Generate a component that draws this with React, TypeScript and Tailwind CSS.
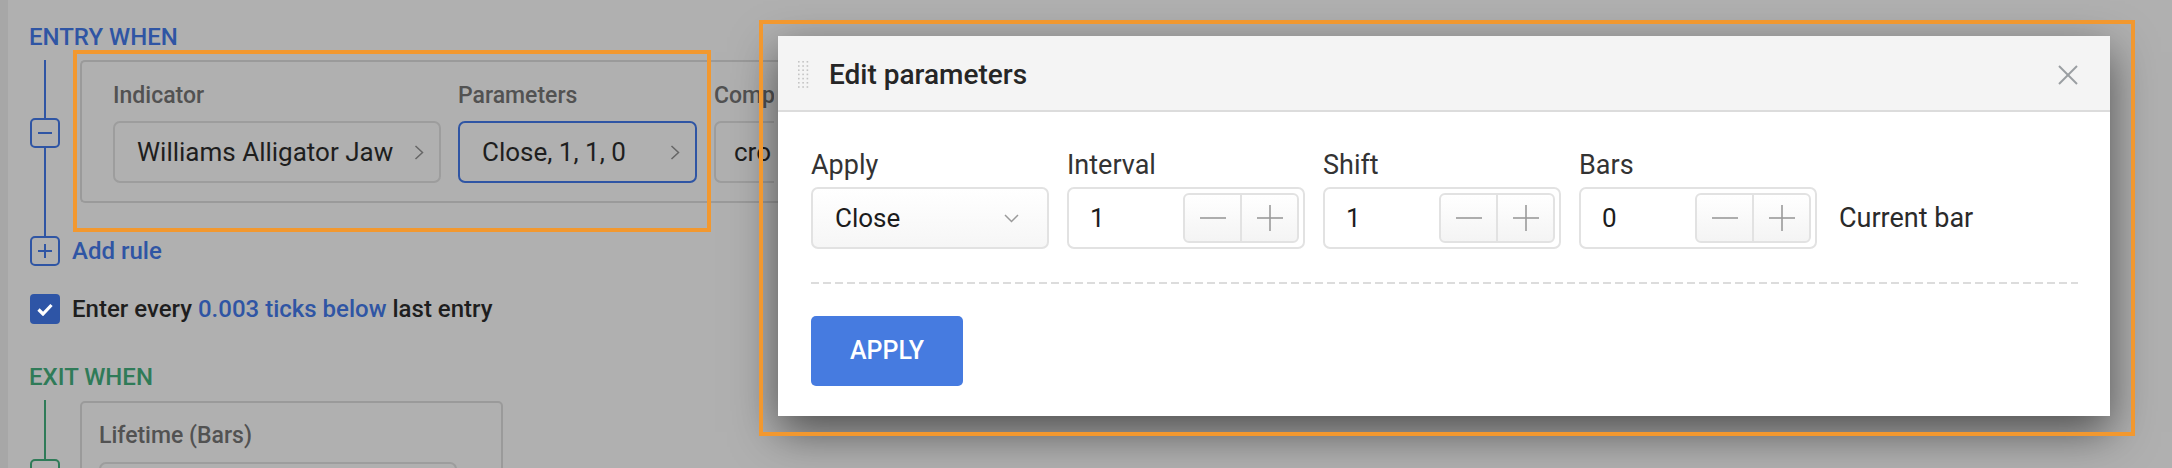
import React from "react";

const ChevronRight = () => (
  <svg width="10" height="15" viewBox="0 0 10 15" fill="none">
    <polyline points="1.5,1 8.5,7.5 1.5,14" stroke="#666" strokeWidth="1.5" />
  </svg>
);

const ChevronDown = () => (
  <svg width="15" height="9" viewBox="0 0 15 9" fill="none">
    <polyline points="1,1 7.5,7.5 14,1" stroke="#9a9a9a" strokeWidth="1.5" />
  </svg>
);

const DragHandle = () => (
  <svg width="11" height="27" viewBox="0 0 11 27">
    {[0, 1, 2].map((c) =>
      [0, 1, 2, 3, 4, 5, 6].map((r) => (
        <rect key={`${c}-${r}`} x={c * 4.3} y={r * 4.2} width="1.6" height="1.6" fill="#c4c4c4" />
      ))
    )}
  </svg>
);

const TreeBox = ({ sign, color }: { sign: "minus" | "plus"; color: string }) => (
  <div
    className="w-[30px] h-[30px] rounded-[5px] border-2 flex items-center justify-center shrink-0"
    style={{ borderColor: color }}
  >
    <svg width="14" height="14" viewBox="0 0 14 14">
      <line x1="0" y1="7" x2="14" y2="7" stroke={color} strokeWidth="2" />
      {sign === "plus" && <line x1="7" y1="0" x2="7" y2="14" stroke={color} strokeWidth="2" />}
    </svg>
  </div>
);

interface StepperFieldProps {
  label: string;
  value: string;
}

const StepperField: React.FC<StepperFieldProps> = ({ label, value }) => (
  <div className="flex flex-col gap-[6px] w-[238px]">
    <span className="text-[27px] leading-[32px] text-[#333]">{label}</span>
    <div className="h-[62px] border-2 border-[#e2e2e2] rounded-[7px] flex items-center pl-[21px] pr-[4px]">
      <span className="flex-1 text-[26px] text-[#1c1c1c]">{value}</span>
      <div className="h-[50px] w-[116px] border-2 border-[#e2e2e2] rounded-[6px] flex bg-gradient-to-b from-white to-[#f4f4f4]">
        <div className="flex-1 flex items-center justify-center border-r-2 border-[#e2e2e2]">
          <svg width="26" height="26" viewBox="0 0 26 26">
            <line x1="0" y1="13" x2="26" y2="13" stroke="#9a9a9a" strokeWidth="1.6" />
          </svg>
        </div>
        <div className="flex-1 flex items-center justify-center">
          <svg width="26" height="26" viewBox="0 0 26 26">
            <line x1="0" y1="13" x2="26" y2="13" stroke="#9a9a9a" strokeWidth="1.6" />
            <line x1="13" y1="0" x2="13" y2="26" stroke="#9a9a9a" strokeWidth="1.6" />
          </svg>
        </div>
      </div>
    </div>
  </div>
);

const EditParametersModal = () => (
  <div className="absolute left-[778px] top-[36px] w-[1332px] h-[380px] bg-white shadow-[0_16px_42px_rgba(0,0,0,0.55)] flex flex-col">
    {/* header */}
    <div className="h-[76px] shrink-0 bg-[#f4f4f4] border-b-2 border-[#dcdcdc] flex items-center pt-[3px] pl-[20px] pr-[32px]">
      <DragHandle />
      <span className="ml-[20px] flex-1 text-[28px] font-medium text-[#262626]">Edit parameters</span>
      <svg width="20" height="20" viewBox="0 0 20 20">
        <line x1="1" y1="1" x2="19" y2="19" stroke="#9a9ea2" strokeWidth="2" />
        <line x1="19" y1="1" x2="1" y2="19" stroke="#9a9ea2" strokeWidth="2" />
      </svg>
    </div>

    {/* body */}
    <div className="flex flex-col pl-[33px] pr-[32px] pt-[37px]">
      <div className="flex items-end gap-[18px]">
        <div className="flex flex-col gap-[6px] w-[238px]">
          <span className="text-[27px] leading-[32px] text-[#333]">Apply</span>
          <div className="h-[62px] border-2 border-[#e2e2e2] rounded-[7px] flex items-center pl-[22px] pr-[28px] bg-gradient-to-b from-white to-[#f6f6f6]">
            <span className="flex-1 text-[26px] text-[#1c1c1c]">Close</span>
            <ChevronDown />
          </div>
        </div>
        <StepperField label="Interval" value="1" />
        <StepperField label="Shift" value="1" />
        <StepperField label="Bars" value="0" />
        <div className="h-[62px] flex items-center ml-[4px]">
          <span className="text-[27px] text-[#2a2a2a]">Current bar</span>
        </div>
      </div>

      <div className="mt-[33px] h-[2px] bg-[repeating-linear-gradient(to_right,#dcdcdc_0px,#dcdcdc_8px,transparent_8px,transparent_12px)]" />

      <button className="mt-[32px] w-[152px] h-[70px] rounded-[5px] bg-[#467be0] text-white text-[25px] font-medium flex items-center justify-center">
        APPLY
      </button>
    </div>
  </div>
);

export default function App() {
  const blue = "#2f55a4";
  const green = "#2f7b58";
  return (
    <div className="relative w-[2172px] h-[468px] overflow-hidden bg-[#b0b0b0] font-['Roboto',sans-serif]">
      <div className="flex h-full">
        <div className="w-[8px] h-full bg-[#a7a7a7] shrink-0" />

        {/* strategy panel */}
        <div className="flex flex-col pl-[21px] pt-[23px]">
          <span className="text-[24px] leading-[28px] font-medium text-[#2f55a4]">ENTRY WHEN</span>

          <div className="flex gap-[20px] mt-[9px] pl-[1px]">
            <div className="flex flex-col items-center w-[30px]">
              <div className="h-[58px] w-[2px] bg-[#2f55a4]" />
              <TreeBox sign="minus" color={blue} />
              <div className="flex-1 w-[2px] bg-[#2f55a4]" />
            </div>
            <div className="pb-[33px]">
              <div className="w-[720px] h-[143px] overflow-hidden border-2 border-r-0 border-[#9a9a9a] rounded-l-[5px] flex gap-[17px] pl-[31px] pt-[20px]">
                <div className="flex flex-col gap-[11px] shrink-0">
                  <span className="text-[23px] leading-[28px] font-medium text-[#525252]">Indicator</span>
                  <div className="w-[328px] h-[62px] border-2 border-[#9d9d9d] rounded-[7px] flex items-center pl-[22px] pr-[15px]">
                    <span className="flex-1 text-[26px] leading-[30px] text-[#1e1e1e]">Williams Alligator Jaw</span>
                    <ChevronRight />
                  </div>
                </div>
                <div className="flex flex-col gap-[11px] shrink-0">
                  <span className="text-[23px] leading-[28px] font-medium text-[#525252]">Parameters</span>
                  <div className="w-[239px] h-[62px] border-2 border-[#2f55a4] rounded-[7px] flex items-center pl-[22px] pr-[15px]">
                    <span className="flex-1 text-[26px] leading-[30px] text-[#1e1e1e]">Close, 1, 1, 0</span>
                    <ChevronRight />
                  </div>
                </div>
                <div className="flex flex-col gap-[11px] shrink-0 w-[60px] overflow-hidden">
                  <span className="text-[23px] leading-[28px] font-medium text-[#525252] whitespace-nowrap">Comp</span>
                  <div className="w-[300px] h-[62px] border-2 border-[#9d9d9d] rounded-[7px] flex items-center pl-[18px]">
                    <span className="text-[26px] leading-[30px] text-[#1e1e1e]">cro</span>
                  </div>
                </div>
              </div>
            </div>
          </div>

          <div className="flex items-center gap-[12px] pl-[1px]">
            <TreeBox sign="plus" color={blue} />
            <span className="text-[24px] leading-[30px] font-medium text-[#2f55a4]">Add rule</span>
          </div>

          <div className="flex items-center gap-[12px] mt-[28px] pl-[1px]">
            <div className="w-[30px] h-[30px] rounded-[4px] bg-[#2e55a6] flex items-center justify-center">
              <svg width="16" height="13" viewBox="0 0 16 13" fill="none">
                <polyline points="1.5,6.5 6,11 14.5,2" stroke="white" strokeWidth="3.2" />
              </svg>
            </div>
            <span className="text-[24px] leading-[30px] font-medium text-[#1e1e1e]">
              Enter every <span className="text-[#2f55a4]">0.003 ticks below</span> last entry
            </span>
          </div>

          <span className="mt-[39px] text-[24px] leading-[28px] font-medium text-[#2f7b58]">EXIT WHEN</span>

          <div className="flex gap-[20px] mt-[9px] pl-[1px]">
            <div className="flex flex-col items-center w-[30px]">
              <div className="h-[59px] w-[2px] bg-[#2f7b58]" />
              <TreeBox sign="minus" color={green} />
            </div>
            <div className="mt-[1px] w-[423px] h-[140px] border-2 border-[#9a9a9a] rounded-[5px] pl-[17px] pt-[19px] flex flex-col gap-[12px]">
              <span className="text-[23px] leading-[28px] font-medium text-[#525252]">Lifetime (Bars)</span>
              <div className="w-[358px] h-[62px] border-2 border-[#9d9d9d] rounded-[7px]" />
            </div>
          </div>
        </div>
      </div>

      <EditParametersModal />

      {/* highlight frames */}
      <div className="absolute left-[73px] top-[50px] w-[638px] h-[182px] border-4 border-[#f2982f]" />
      <div className="absolute left-[759px] top-[20px] w-[1376px] h-[416px] border-4 border-[#f2982f]" />
    </div>
  );
}
